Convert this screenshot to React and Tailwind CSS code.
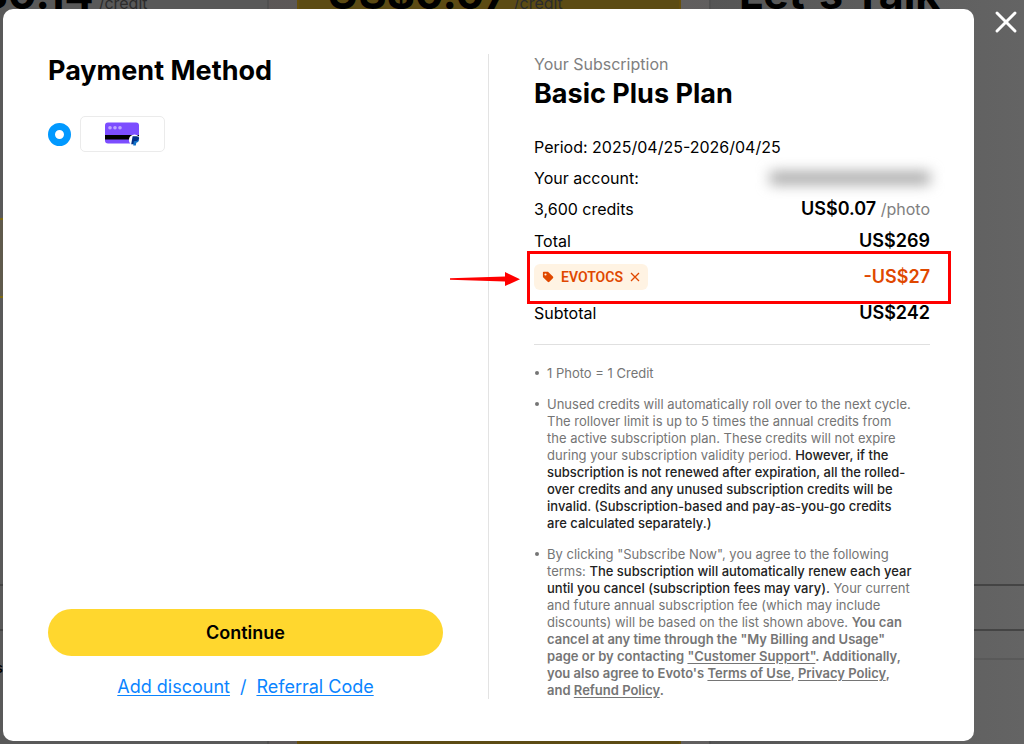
import { useState } from 'react';
import { X } from 'lucide-react';

const linkClass = 'underline underline-offset-2';

function CardIcon() {
  return (
    <svg width="36" height="24" viewBox="0 0 36 24" aria-hidden="true">
      <rect x="0" y="0.5" width="34" height="21" rx="3" fill="#7c4dff" />
      <rect x="0" y="13" width="34" height="4.5" fill="#000" />
      <circle cx="5" cy="5.7" r="1.8" fill="#bda6ff" />
      <circle cx="10" cy="5.7" r="1.8" fill="#bda6ff" />
      <circle cx="15" cy="5.7" r="1.8" fill="#bda6ff" />
      <circle cx="29.5" cy="18" r="5.6" fill="#fff" />
      <path d="M27.6 14.3h3.8c2.1 0 3.1 1.2 2.6 3-.5 1.7-1.8 2.5-3.5 2.5h-1l-.5 2.4h-2.8z" fill="#012f86" />
      <path d="M30.2 19.2c1.7 0 3-.7 3.6-2.1.5 2.1-.6 3.5-2.5 3.7l-.5 2.6h-2.6l.6-4.2z" fill="#1072c9" />
    </svg>
  );
}

function TagIcon() {
  return (
    <svg width="12" height="12" viewBox="0 0 12 12" aria-hidden="true">
      <path
        fillRule="evenodd"
        d="M1.6.8h3.9c.4 0 .7.1 1 .4l4.4 4.4c.5.5.5 1.2 0 1.7l-3.5 3.5c-.5.5-1.2.5-1.7 0L1.3 6.4c-.3-.3-.4-.6-.4-1V1.5c0-.4.3-.7.7-.7zM3.5 2.4a1.1 1.1 0 100 2.2 1.1 1.1 0 000-2.2z"
        fill="#e04800"
      />
    </svg>
  );
}

// dimmed pricing page behind the dialog
function PricingBackdrop() {
  return (
    <div className="absolute inset-0 overflow-hidden bg-linear-to-r from-[#595352] to-[#646464] flex gap-7" aria-hidden="true">
      <div className="relative w-[389px] shrink-0 -ml-[120px] pl-10 bg-[#595959] border-r-2 border-[#505050]">
        <Price amount="US$0.14" />
        <div className="absolute inset-x-0 top-[218px] h-20 bg-[#5f5a4c] border-y-2 border-[#7d6912]" />
        <div className="absolute inset-x-0 top-[584px] h-[47px] border-y-2 border-[#444444]" />
        <p className="absolute left-0 w-[123px] top-[658px] text-right text-sm leading-5 font-semibold">credits</p>
      </div>
      <div className="w-[384px] shrink-0 pl-7 bg-[#5c4b14] border-x-2 border-[#664f0c]">
        <Price amount="US$0.07" />
      </div>
      <div className="relative flex-1 pl-7 bg-linear-to-r from-[#555555] to-[#646464] border-l-2 border-[#505050]">
        <p className="-mt-[27px] text-[43px] leading-10 font-bold whitespace-nowrap">Let's Talk</p>
        <div className="absolute inset-x-0 top-[584px] h-[47px] border-y-2 border-[#444444]" />
        <div className="absolute inset-x-0 top-[658px] border-t-2 border-[#595959]" />
      </div>
    </div>
  );
}

function Price({ amount }) {
  return (
    <p className="-mt-[27px] flex items-baseline gap-[5px] text-[43px] leading-10 font-bold whitespace-nowrap">
      {amount}
      <span className="text-base leading-5 font-normal text-[#2c2c2c]">/credit</span>
    </p>
  );
}

function Note({ children }) {
  return (
    <li className="flex gap-2">
      <span className="mt-[6px] ml-[1px] size-1 shrink-0 rounded-full bg-[#757575]" />
      <p className="max-w-[370px]">{children}</p>
    </li>
  );
}

export default function App() {
  const [method, setMethod] = useState('card');
  const [coupon, setCoupon] = useState('EVOTOCS');

  return (
    <div className="relative min-h-screen text-black" style={{ fontFamily: "'Inter', sans-serif" }}>
      <PricingBackdrop />

      <div className="relative flex items-start gap-[14px] pl-[3px] pb-[3px]">
        <div role="dialog" aria-label="Payment" className="mt-[9px] flex-1 grid grid-cols-[220fr_221fr] bg-white rounded-[10px] pl-[45px] pr-11 pt-[45px] pb-[42px]">
          <div className="flex flex-col pr-[45px]">
            <h2 className="text-[27px] leading-[34px] font-bold">Payment Method</h2>
            <label className="mt-7 flex items-center gap-[9px]">
              <input
                type="radio"
                name="method"
                value="card"
                aria-label="Card"
                checked={method === 'card'}
                onChange={(e) => setMethod(e.target.value)}
                className="appearance-none size-[23px] rounded-full border-[7px] border-[#0199ff] bg-white"
              />
              <span className="w-[85px] h-9 flex items-center justify-center rounded-[5px] border border-[#ebebeb]">
                <CardIcon />
              </span>
            </label>

            <button className="mt-auto h-[47px] rounded-full bg-[#ffd72e] text-lg font-semibold">Continue</button>
            <div className="mt-[19px] flex justify-center gap-[10px] text-lg leading-6 text-[#0a84ff]">
              <a href="#discount" className={linkClass}>Add discount</a>
              <span>/</span>
              <a href="#referral" className={linkClass}>Referral Code</a>
            </div>
          </div>

          <div className="border-l border-[#e3e3e3] pl-[45px]">
            <p className="text-base leading-5 text-[#808080]">Your Subscription</p>
            <h2 className="mt-1 mb-[21px] text-[27px] leading-8 font-bold">Basic Plus Plan</h2>

            <p className="text-base leading-8">Period: 2025/04/25-2026/04/25</p>
            <div className="flex items-center justify-between h-[30px]">
              <span>Your account:</span>
              {/* account email stays masked */}
              <span className="w-40 h-3 bg-[#a0a0a0] blur-[7px]" />
            </div>
            <div className="flex items-baseline justify-between h-8 leading-8">
              <span>3,600 credits</span>
              <span className="text-[#808080]">
                <b className="text-lg leading-8 font-semibold text-black">US$0.07</b> /photo
              </span>
            </div>
            <div className="flex items-baseline justify-between h-8 leading-8">
              <span>Total</span>
              <b className="text-lg leading-8 font-semibold">US$269</b>
            </div>
            {coupon && (
              <div className="relative flex items-center justify-between h-10">
                <div className="flex items-center h-[26px] px-2 rounded-md bg-[#fff3e3] text-[#e04800]">
                  <TagIcon />
                  <span className="mx-[7px] text-sm font-semibold" style={{ fontFamily: 'Roboto, sans-serif' }}>
                    {coupon}
                  </span>
                  <button aria-label="Remove discount" onClick={() => setCoupon('')}>
                    <svg width="10" height="10" viewBox="0 0 10 10" stroke="currentColor" strokeWidth="1.3">
                      <path d="M1 1l8 8M9 1L1 9" />
                    </svg>
                  </button>
                </div>
                <b className="text-lg leading-8 font-semibold text-[#e04800]">-US$27</b>

                <div className="absolute -top-[6px] -bottom-[7px] -left-[7px] -right-[21px] border-[3px] border-[#ff0000] pointer-events-none" />
                <svg className="absolute -left-[84px] top-[14px] pointer-events-none" width="70" height="16" viewBox="0 0 70 16">
                  <path d="M0 7.2L55 5.6V1L70 8.2 55 15V10.4L0 8.8z" fill="#ff0000" />
                </svg>
              </div>
            )}
            <div className="flex items-baseline justify-between h-8 leading-8">
              <span>Subtotal</span>
              <b className="text-lg leading-8 font-semibold">US$242</b>
            </div>

            <hr className="mt-[15px] mb-5 border-[#e0e0e0]" />

            <ul className="flex flex-col gap-[14px] text-[13px] leading-[17px] text-[#757575]">
              <Note>1 Photo = 1 Credit</Note>
              <Note>
                Unused credits will automatically roll over to the next cycle. The rollover limit is up to 5 times the
                annual credits from the&nbsp;active subscription plan. These credits will not expire during&nbsp;your
                subscription validity period.{' '}
                <span className="font-medium text-[#222222]">
                  However, if the subscription is not renewed after expiration, all the rolled-over credits and any
                  unused subscription credits will be invalid. (Subscription-based and pay-as-you-go credits
                  are&nbsp;calculated separately.)
                </span>
              </Note>
              <Note>
                By clicking "Subscribe Now", you agree to the following terms:{' '}
                <span className="font-medium text-[#222222]">
                  The subscription will automatically renew each year until you cancel (subscription fees may vary).
                </span>{' '}
                Your current and future annual subscription fee (which may include discounts) will be based on the list
                shown above.{' '}
                <span className="font-semibold">
                  You can cancel at any time through the "My Billing and Usage" page or by contacting{' '}
                  <a href="#support" className={linkClass}>"Customer Support"</a>. Additionally, you also agree to
                  Evoto's <a href="#terms" className={linkClass}>Terms of Use</a>,{' '}
                  <a href="#privacy" className={linkClass}>Privacy Policy</a>,
                  and&nbsp;<a href="#refund" className={linkClass}>Refund Policy</a>.
                </span>
              </Note>
            </ul>
          </div>
        </div>

        <button aria-label="Close" className="mt-1 text-white">
          <X size={36} strokeWidth={2} />
        </button>
      </div>
    </div>
  );
}
